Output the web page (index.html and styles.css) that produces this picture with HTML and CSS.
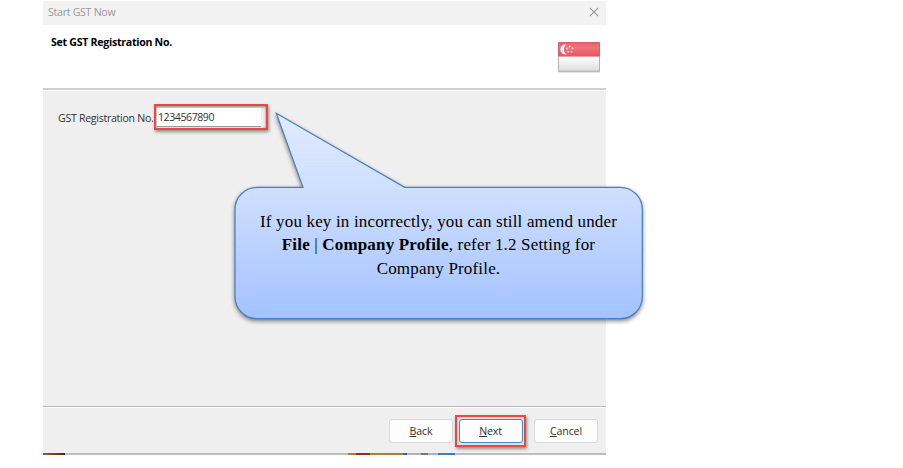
FILE: index.html
```
<!DOCTYPE html>
<html lang="en">
<head>
<meta charset="utf-8">
<title>Start GST Now</title>
<link rel="stylesheet" href="styles.css">
</head>
<body>
<main class="dialog">
  <header class="titlebar">
    <span class="title">Start GST Now</span>
    <svg class="close" width="10" height="10" viewBox="0 0 10 10"><path d="M.8.8l8.4 8.4M9.2.8L.8 9.2" stroke="#999" stroke-width="1.1" fill="none"/></svg>
  </header>
  <section class="heading">
    <h1>Set GST Registration No.</h1>
    <svg class="flag" width="44" height="33" viewBox="0 0 44 33">
      <defs>
        <linearGradient id="red" x2="0" y2="1"><stop stop-color="#e9606a"/><stop offset=".35" stop-color="#ef737b"/><stop offset="1" stop-color="#e9535f"/></linearGradient>
        <linearGradient id="white" x2="0" y2="1"><stop stop-color="#fff"/><stop offset="1" stop-color="#dedede"/></linearGradient>
      </defs>
      <rect x="1" y="2" width="42" height="29.6" rx="1" fill="#ccc"/>
      <rect x="1.5" y="1.5" width="41" height="14.2" fill="url(#red)"/>
      <rect x="1.5" y="15.7" width="41" height="14" fill="url(#white)"/>
      <path d="M1.5 15.7V1.5h41v14.2" fill="none" stroke="#d4606a"/>
      <path d="M1.5 15.7v14.5h41V15.7" fill="none" stroke="#b4b4b4"/>
      <path d="M9.8 3.6a5 5 0 1 0 0 9.6 5.4 5.4 0 0 1 0-9.6z" fill="#fff"/>
      <g fill="#fbd5d7"><circle cx="12.7" cy="5.5" r="1"/><circle cx="10.2" cy="7.5" r="1"/><circle cx="15.5" cy="7.5" r="1"/><circle cx="11.1" cy="10.7" r="1"/><circle cx="14.6" cy="10.7" r="1"/></g>
    </svg>
  </section>
  <section class="content">
    <label for="gst">GST Registration No.</label>
    <div class="field-mark"><input id="gst" value="1234567890"></div>
  </section>
  <footer class="actions">
    <button><span><u>B</u>ack</span></button>
    <div class="button-mark"><button class="primary"><span><u>N</u>ext</span></button></div>
    <button><span><u>C</u>ancel</span></button>
  </footer>
  <div class="edge"></div>
</main>
<aside class="callout">
  <svg class="bubble" width="430" height="230" viewBox="225 105 430 230">
    <defs><linearGradient id="blue" gradientUnits="userSpaceOnUse" x1="0" y1="113" x2="0" y2="319"><stop stop-color="#e1ebff"/><stop offset=".36" stop-color="#cfdfff"/><stop offset="1" stop-color="#a3c2ff"/></linearGradient></defs>
    <path d="M257 187.3H303L276.3 113.3 404.7 187.3H620.3A22 22 0 0 1 642.3 209.3V296.7A22 22 0 0 1 620.3 318.7H257A22 22 0 0 1 235 296.7V209.3A22 22 0 0 1 257 187.3Z" fill="url(#blue)" stroke="#4a7ebb" stroke-width="1.2"/>
  </svg>
  <p>If you key in incorrectly, you can still amend under<br><b>File</b> | <b>Company Profile</b>, refer 1.2 Setting for<br>Company Profile.</p>
</aside>
</body>
</html>
```
FILE: styles.css
```
* { box-sizing: border-box; }
body { margin: 0; height: 468px; overflow: hidden; background: #fff; position: relative; }
.dialog { width: 563px; margin-left: 43px; padding-top: 1px; font: 10.6px/14px "Open Sans", "Noto Sans", sans-serif; color: #333; }
.titlebar { height: 24px; background: #f2f2f2; display: flex; align-items: center; justify-content: space-between; padding: 0 7px 2px 5px; color: #999; }
.title { letter-spacing: -.28px; }
.close { display: block; }
.heading { height: 63px; display: flex; justify-content: space-between; align-items: flex-start; padding: 10px 5px 0 8px; }
h1 { margin: 0; font-size: 10.6px; line-height: 14px; color: #000; letter-spacing: -.28px; }
.flag { display: block; margin-top: 6px; }
.content { height: 318px; border-top: 2px solid #d0d0d0; background: #efefef; box-shadow: inset 0 1px #fff; display: flex; align-items: flex-start; padding: 14px 0 0 15px; }
.content label { width: 96px; margin-top: 7px; letter-spacing: -.29px; white-space: nowrap; }
.field-mark { width: 114px; height: 26px; border: 2px solid #f24347; padding: 2px 5px 1px 1px; box-shadow: 1px 2px 3px #0006, inset 0 1px 3px #0007; background: #efefef; }
input { display: block; width: 100%; height: 19px; border: 0; border-bottom: 1px solid #999; padding: 0 0 0 1px; background: #fff; font: inherit; color: #333; outline: 0; letter-spacing: -.45px; }
.actions { height: 47px; border-top: 1px solid #b8b8b8; box-shadow: inset 0 1px #fff; background: #efefef; display: flex; align-items: flex-start; padding: 8px 7px 0 346px; }
button { display: block; width: 64px; height: 24px; margin-top: 4px; padding: 0; border: 1px solid #d8d8d8; border-radius: 3px; background: #fdfdfd; font: inherit; color: #333; letter-spacing: -.15px; }
u { text-underline-offset: 1px; }
.button-mark { width: 71px; height: 32px; margin: 0 8px 0 2px; padding: 2px 1.5px; border: 2px solid #f24347; background: #ddd; box-shadow: 1px 2px 3px #0006; }
.button-mark button { margin: 0; border: 1.5px solid #3f8cc8; }
.edge { height: 2px; background: linear-gradient(90deg, #a05b20, #5e240d) 0 0 / 22px 2px no-repeat, linear-gradient(90deg, #a6842f 0 8px, #a52422 8px 22px, #a6842f 22px 55px, #3265b2 55px 59px, #a9b5bf 59px 73px, #777 73px 80px, #a9b5bf 80px 90px, #437eb4 90px 107px) 305px 0 / 107px 2px no-repeat, #bebebe; }
.callout { position: absolute; left: 225px; top: 105px; width: 430px; height: 230px; }
.bubble { display: block; filter: drop-shadow(0 2px 2px #0007); }
.callout p { position: absolute; left: 10px; top: 105px; width: 407px; margin: 0; text-align: center; white-space: nowrap; font: 17px/23.3px "Liberation Serif", serif; letter-spacing: .17px; color: #000; }
```
